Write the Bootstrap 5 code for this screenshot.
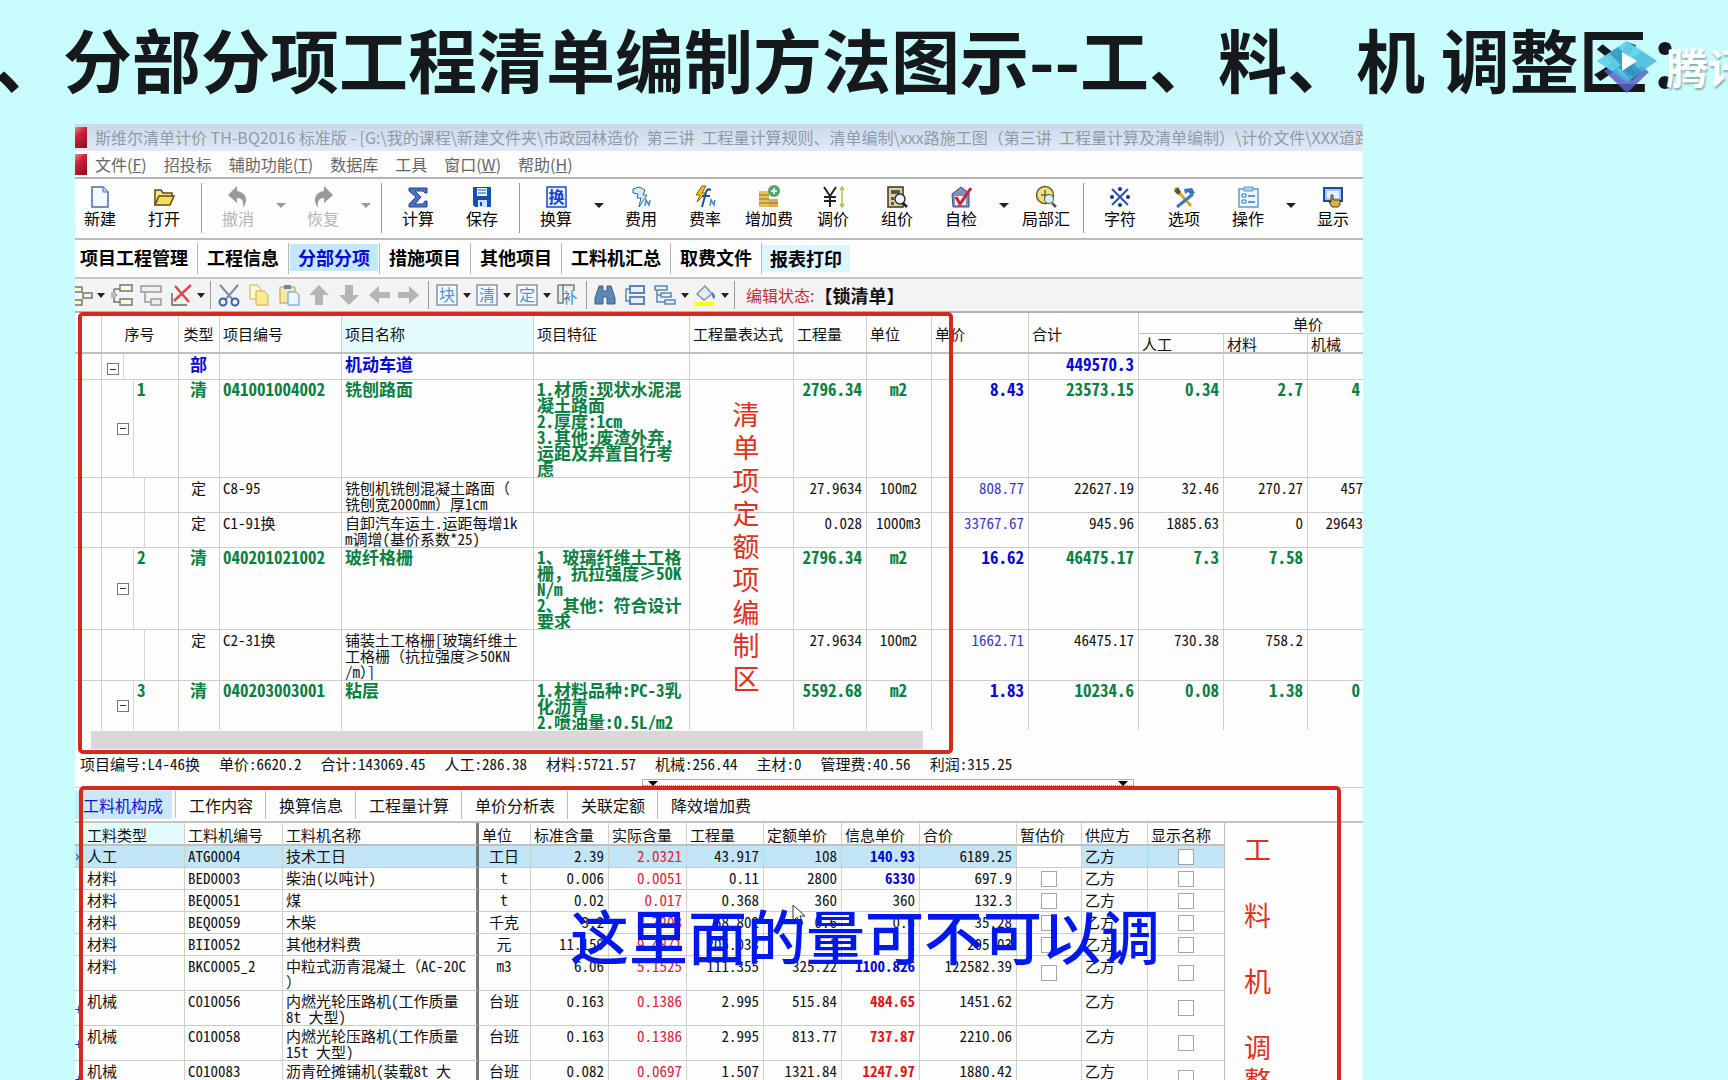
<!DOCTYPE html>
<html lang="zh-CN">
<head>
<meta charset="utf-8">
<meta name="viewport" content="width=device-width, initial-scale=1">
<title>分部分项工程清单编制方法图示</title>
<link href="https://cdn.jsdelivr.net/npm/bootstrap@5.3.0/dist/css/bootstrap.min.css" rel="stylesheet">
<style>
body{background:#c8fcfd;font-family:"Noto Sans CJK SC",sans-serif;color:#111}
.slide{height:100vh}
.slide-title{height:124px;font-size:69px;line-height:116px;font-weight:700;color:#15191c;margin:0 0 0 -6px}
.stage{padding-left:75px;padding-right:365px}
.app-window{background:#fdfdfe}
.brand{right:0;top:38px;width:132px;height:60px}
.brand-name{font-size:42px;line-height:50px;font-weight:700;color:#fff;text-shadow:1px 2px 2px #8aa;left:70px;top:3px}
.title-bar{height:27px;background:linear-gradient(#c9d8ea,#dfeaf7);color:#929ba5;font-size:16px;line-height:27px}
.menu-bar{height:28px;border-bottom:2px solid #b5b5b5;font-size:16px;line-height:26px;gap:17px}
.menu-bar a{color:#666}
.app-mark{width:12px;height:21px;background:linear-gradient(135deg,#e88 0,#d0203a 35%,#8e0a20);flex:none}
.menu-bar .app-mark{margin-right:-9px}
.path-text{white-space:pre}
.tool-bar{height:61px;border-bottom:2px solid #bcbcbc;padding-left:0;margin-left:-7px}
.tool-btn{width:64px;flex:none;border:0;background:none;padding:6px 0 0;font-size:16px;line-height:18px;color:#000;display:flex;flex-direction:column;align-items:center}
.tool-btn svg{width:24px;height:24px}
.tool-btn:disabled{color:#b4b4b4}
.drop{border:0;background:none;padding:0;flex:none}
.drop::after{content:"";display:block;margin:auto;width:0;border:5px solid transparent;border-top-color:#222;border-bottom:0}
.drop.off::after{border-top-color:#999}
.tool-bar .drop{width:21px;height:52px}
.tool-sep{width:10px;flex:none;display:flex;justify-content:center}
.tool-sep::after{content:"";width:1px;background:#9a9a9a;height:100%}
.tool-bar .tool-sep{height:50px;margin-top:4px}
.page-tabs{height:39px;border-bottom:2px solid #c6c6c6;font-size:18px;font-weight:700}
.page-tabs a{color:#000;padding:0 8px;margin:5px 0;line-height:27px;white-space:nowrap;text-decoration:none}
.page-tabs .tab-slot{border-right:1px solid #b5b5b5;padding:0 1px;margin:3px 0}
.page-tabs .tab-slot a{display:block;margin:1px 0}
.page-tabs .tab-slot:first-child a{padding-left:4px}
.page-tabs a.now{background:#c3e8fa;color:#0a0ad6}
.page-tabs a.hot{background:#dff5fd}
.edit-bar{height:34px;background:#f3f3f3;border-bottom:2px solid #adb3b3}
.edit-tools{margin-left:-9px}
.edit-btn{width:30px;flex:none;border:0;background:none;padding:0;line-height:0;text-align:center}
.edit-btn svg{width:24px;height:24px}
.edit-tools .drop{width:10px}
.edit-tools .drop::after{border-width:5px 4px 0}
.edit-tools .tool-sep{width:8px;height:28px}
.edit-state{font-size:16px;white-space:pre}
.edit-state b{font-size:18px}
.state-label{color:#b8323c}
.grid-pane,.lower-pane,.info-line{font-family:"Noto Sans Mono CJK SC","Noto Sans CJK SC","Liberation Mono",monospace;font-size:15px;line-height:16px}
.sheet{table-layout:fixed;width:100%;border-collapse:separate;border-spacing:0}
.sheet th{font-weight:400;color:#111}
.sheet td,.sheet th{border-right:1px solid #cfd0c6;border-bottom:1px solid #c9ccd0;padding:1px 4px 0 3px;vertical-align:top;white-space:nowrap;overflow:hidden}
.sheet tr>*:last-child{border-right:0}
.sheet thead th{vertical-align:middle;border-bottom:0;padding-top:2px}
.sheet thead tr:last-child th,.sheet thead th[rowspan]{border-bottom:2px solid #bcc0c3}
.bill thead tr{height:20px}
.bill tbody tr:first-child td{padding-top:2px}
.bill td{padding-top:1px}
.bill thead .sub-row th{border-top:1px solid #bbb}
.bill .group-head{padding-right:40px}
.bill .rate-item td{padding-top:2px}
.bill .list-item,.bill .part{font-size:17px;font-weight:700;color:#0a7f42}
.bill .part{color:#0808d0}
.bill .tail{padding-right:0}
.bill .cut{padding-right:3px}
.cost{color:#0808d0}
.rate-item .cost{color:#3a36c8}
.h-part{height:26px}.h-six{height:97px}.h-two{height:35px}.h-five{height:82px}.h-three{height:50px}.h-open{height:48px}
.h-open td{border-bottom:0}
.sheet .tree{padding-left:35px;position:relative;background:linear-gradient(#d5d5d5,#d5d5d5) 31px 0/1px 100% no-repeat}
.sheet .tree.root{background-position:21px 0}
.sheet .tree.leaf{background-position:42px 0}
.fold{position:absolute;left:15px;top:calc(50% - 6px);width:12px;height:12px;border:1px solid #777;background:#fff;padding:0}
.root .fold{left:5px;top:9px}
.fold::after{content:"";display:block;width:6px;height:1px;background:#333;margin:auto}
.sheet .picked{background:#e3fbfd}
.mark-frame{border:4px solid #d5291d;border-radius:5px;pointer-events:none}
.frame-top{left:3px;top:-1px;width:875px;height:442px}
.frame-low{left:4px;top:-2px;right:22px;bottom:-10px}
.note{color:#dc3222;font-size:27px;line-height:33px;text-align:center;font-family:"Noto Sans CJK SC",sans-serif}
.note-top{left:657px;top:84px;width:28px}
.note-low{padding:9px 0 0 19px}
.scroll-row{height:22px;padding:1px 0 0 16px}
.scroll-thumb{width:832px;height:18px;background:#dad7d8}
.info-line{height:27px;padding:0 0 3px 5px;gap:19px;white-space:nowrap}
.split-line{height:9px;border-bottom:1px solid #c6ccdc}
.split-grip{width:492px;height:7px;margin-left:567px;border:1px solid #aab;border-bottom:1px dotted #c66;padding:1px 5px 0;line-height:0}
.split-grip i{border:5px solid transparent;border-top-color:#000;border-bottom:0}
.low-tabs{height:35px;border-bottom:2px solid #c4c4c4;font-size:16px;font-family:"Noto Sans CJK SC",sans-serif}
.low-tabs a{color:#111;padding:0 12px 0 13px;line-height:28px;margin:3px 0 2px;border-right:1px solid #bbb;text-decoration:none;white-space:nowrap}
.low-tabs a:last-child{border:0}
.low-tabs a.now{padding:0 9px 0 8px;margin-right:3px;background:#cbe8fb;color:#1414cf;border:0}
.low-tabs .first-sep{width:1px;background:#bbb;margin:3px 0}
.parts{width:1150px;flex:none;border-right:1px solid #bbb}
.parts thead th{height:23px}
.parts td{height:22px;padding-top:2px}
.parts .tall td{height:35px}
.parts .sel td{background:#c2e6f8}
.parts .sel td.blank{background:#fdfdfe}
.parts .rule{border-right:3px solid #777}
.parts td.box{vertical-align:middle;text-align:center;padding:0;line-height:0}
.parts input{appearance:none;width:16px;height:16px;border:1px solid #a5a5a5;background:#fff;margin:0}
.parts .used{color:#e02036}
.parts .up{color:#e01818}
.parts .pin{padding:1px 0 0;color:#2a2a9a}
.caption-text{left:495px;top:105px;font-size:59px;line-height:84px;font-weight:500;color:#0018ee;white-space:nowrap;font-family:"Noto Sans CJK SC",sans-serif}
.pointer{left:717px;top:116px;width:14px;height:22px}
</style>
<script src="https://cdn.jsdelivr.net/npm/bootstrap@5.3.0/dist/js/bootstrap.bundle.min.js"></script>
</head>
<body>
<div class="slide overflow-hidden position-relative">
<h1 class="slide-title text-nowrap">、分部分项工程清单编制方法图示--工、料、机 调整区：</h1>
<div class="brand position-absolute overflow-hidden">
<svg width="64" height="58" viewBox="0 0 64 58"><path d="M8 33l8-5 15 13 14-13 8 6-22 21z" fill="#5a62c4" opacity=".85"/><path d="M31 3l30 20-30 21L1 23z" fill="#45b9dd" opacity=".85"/><path d="M31 3l15 10-30 20L1 23z" fill="#6fdcf0" opacity=".7"/><path d="M13 15l9-6 24 25-8 6z" fill="#2a8fb8" opacity=".7"/><path d="M26 14l15 9-15 10z" fill="#fff"/></svg>
<span class="brand-name position-absolute text-nowrap">腾讯</span>
</div>
<main class="stage">
<div class="app-window position-relative overflow-hidden">
<div class="title-bar d-flex align-items-center overflow-hidden"><span class="app-mark me-2"></span><span class="path-text">斯维尔清单计价 TH-BQ2016 标准版 - [G:\我的课程\新建文件夹\市政园林造价  第三讲  工程量计算规则、清单编制\xxx路施工图（第三讲  工程量计算及清单编制）\计价文件\XXX道路</span></div>
<nav class="menu-bar d-flex align-items-center text-nowrap"><span class="app-mark"></span>
<a class="text-decoration-none" href="#">文件(<u>F</u>)</a><a class="text-decoration-none" href="#">招投标</a><a class="text-decoration-none" href="#">辅助功能(<u>T</u>)</a><a class="text-decoration-none" href="#">数据库</a><a class="text-decoration-none" href="#">工具</a><a class="text-decoration-none" href="#">窗口(<u>W</u>)</a><a class="text-decoration-none" href="#">帮助(<u>H</u>)</a></nav>
<div class="tool-bar d-flex text-nowrap">
<button class="tool-btn"><svg viewBox="0 0 24 24"><path d="M4 2h11l5 5v15H4z" fill="#f4f8ff" stroke="#5068b0" stroke-width="1.5"/><path d="M15 2v5h5" fill="#c4d4f4" stroke="#5068b0"/></svg>新建</button>
<button class="tool-btn"><svg viewBox="0 0 24 24"><path d="M3 20V5h6l2 3h9v4" fill="#f5e08a" stroke="#5c4c10" stroke-width="1.5"/><path d="M3 20l4-9h15l-4 9z" fill="#f8dc60" stroke="#5c4c10" stroke-width="1.5"/></svg>打开</button>
<span class="tool-sep"></span>
<button class="tool-btn" disabled><svg viewBox="0 0 24 24"><path d="M11 1v5c9 1 12 9 6 17 1-7-1-10-6-10v5L2 10z" fill="#999"/></svg>撤消</button><button class="drop off" aria-label="撤消列表"></button>
<button class="tool-btn" disabled><svg viewBox="0 0 24 24"><path d="M13 1v5C4 7 1 15 7 23c-1-7 1-10 6-10v5l9-8z" fill="#999"/></svg>恢复</button><button class="drop off" aria-label="恢复列表"></button>
<span class="tool-sep"></span>
<button class="tool-btn"><svg viewBox="0 0 24 24"><path d="M3 3h18v5h-2l-2-2H9l6 6-6 7h8l2-3h2v6H3v-3l7-7-7-6z" fill="#4a70c0" stroke="#26458e"/></svg>计算</button>
<button class="tool-btn"><svg viewBox="0 0 24 24"><path d="M3 2h18v20H5l-2-2z" fill="#1450b4"/><path d="M7 3h10v8H7z" fill="#dff"/><path d="M8 5h8M8 8h8" stroke="#1450b4"/><path d="M8 15h9v7H8z" fill="#cfe4fa"/><path d="M10 17h2v4h-2z" fill="#1450b4"/></svg>保存</button>
<span class="tool-sep"></span>
<button class="tool-btn"><svg viewBox="0 0 24 24"><rect x="3" y="2" width="19" height="20" fill="#e8f0ff" stroke="#1848c8" stroke-width="1.5"/><text x="12.500" y="18" font-size="16" font-weight="700" text-anchor="middle" fill="#1440d0">换</text></svg>换算</button><button class="drop" aria-label="换算列表"></button>
<button class="tool-btn"><svg viewBox="0 0 24 24"><path d="M4 4l6-2 6 3-2 5h4l-8 12 2-9H8l1-4-5-1z" fill="#d6ecf8" stroke="#2f6a90"/><path d="M16 21l1-6 3 5 1-5" fill="none" stroke="#3f8ad0" stroke-width="1.500"/></svg>费用</button>
<button class="tool-btn"><svg viewBox="0 0 24 24"><path d="M9 1l-6 9h4l-3 7 9-9H9l4-7z" fill="#f6c31c" stroke="#8a6408"/><path d="M18 5c-4-2-5 1-6 6l-3 11M9 11h8" fill="none" stroke="#1c50a0" stroke-width="2"/><path d="M17 21l1-6 3 5 1-5" fill="none" stroke="#3f8ad0" stroke-width="1.500"/></svg>费率</button>
<button class="tool-btn"><svg viewBox="0 0 24 24"><path d="M2 6h10v16H2z" fill="#e6bf55"/><path d="M12 14h9v8h-9z" fill="#d7b052"/><path d="M2 10h10M2 14h10M2 18h19" stroke="#94752a"/><circle cx="17" cy="6" r="6" fill="#5c9f74"/><path d="M17 3v6M14 6h6" stroke="#cfe" stroke-width="2"/></svg>增加费</button>
<button class="tool-btn"><svg viewBox="0 0 24 24"><path d="M3 2l6 9 6-9M9 11v11M3 12h12M3 16h12" fill="none" stroke="#222" stroke-width="2"/><path d="M21 3v18M19 5l2-3 2 3M19 19l2 3 2-3" fill="none" stroke="#aec43c" stroke-width="1.500"/></svg>调价</button>
<button class="tool-btn"><svg viewBox="0 0 24 24"><rect x="3" y="2" width="15" height="20" fill="#e5d190" stroke="#333" stroke-width="1.500"/><path d="M6 5h9v4H6zM6 12h3v3H6zM6 17h3v3H6z" fill="#555"/><circle cx="15" cy="14" r="5" fill="#eef7fd" stroke="#333" stroke-width="1.500"/><path d="M18 18l4 4" stroke="#222" stroke-width="2.500"/></svg>组价</button>
<button class="tool-btn"><svg viewBox="0 0 24 24"><path d="M3 9l9-7 8 6v14H4z" fill="#8090c4" stroke="#444b70"/><path d="M6 11h11v9H6z" fill="#f7eef4"/><path d="M7 12l4 7L22 3" fill="none" stroke="#cf2436" stroke-width="3"/></svg>自检</button><button class="drop" aria-label="自检列表"></button>
<button class="tool-btn"><svg viewBox="0 0 24 24"><circle cx="11" cy="10" r="8.500" fill="#f3df80" stroke="#665a28" stroke-width="1.500"/><path d="M11 5v9M7 10h8" stroke="#5a6e50" stroke-width="1.500"/><circle cx="15" cy="14" r="4.500" fill="#ddeef8" stroke="#555"/><path d="M18 18l4 4" stroke="#555" stroke-width="2.500"/></svg>局部汇</button>
<span class="tool-sep"></span>
<button class="tool-btn"><svg viewBox="0 0 24 24"><path d="M4 4l16 16M20 4L4 20" stroke="#2850b0" stroke-width="2"/><g fill="#16337c"><circle cx="12" cy="4" r="2"/><circle cx="12" cy="20" r="2"/><circle cx="4" cy="12" r="2"/><circle cx="20" cy="12" r="2"/></g></svg>字符</button>
<button class="tool-btn"><svg viewBox="0 0 24 24"><path d="M3 3l16 18" stroke="#e0a818" stroke-width="3"/><path d="M21 9L5 22" stroke="#3a78c0" stroke-width="3"/><path d="M12 4l8-1 3 5-4 2-3-3-3 2z" fill="#3a78c0"/><path d="M2 6l4-4 3 5-3 3z" fill="#555a30"/></svg>选项</button>
<button class="tool-btn"><svg viewBox="0 0 24 24"><path d="M3 4h19v18H3z" fill="#edf7fe" stroke="#5c9cce" stroke-width="1.500"/><path d="M8 2h9v4H8z" fill="#a8d0ec" stroke="#5c9cce"/><path d="M6 9h4v3H6zM6 15h4v3H6z" fill="none" stroke="#347cbc"/><path d="M12 11h7M12 17h7" stroke="#347cbc" stroke-width="1.500"/></svg>操作</button><button class="drop" aria-label="操作列表"></button>
<button class="tool-btn"><svg viewBox="0 0 24 24"><path d="M3 3h18v13H3z" fill="#9cc4f0" stroke="#234c94" stroke-width="2"/><path d="M6 6h12v7H6z" fill="#e1f1ff"/><path d="M10 10h2v5h7v5l-2 2h-6l-3-5h2z" fill="#dcb246" stroke="#4d3c14"/></svg>显示</button>
</div>
<nav class="page-tabs d-flex">
<span class="tab-slot"><a href="#">项目工程管理</a></span><span class="tab-slot"><a href="#">工程信息</a></span><span class="tab-slot"><a class="now" href="#">分部分项</a></span><span class="tab-slot"><a href="#">措施项目</a></span><span class="tab-slot"><a href="#">其他项目</a></span><span class="tab-slot"><a href="#">工料机汇总</a></span><span class="tab-slot"><a href="#">取费文件</a></span><a class="hot" href="#">报表打印</a>
</nav>
<div class="edit-bar d-flex align-items-center">
<div class="edit-tools d-flex align-items-center">
<button class="edit-btn" aria-label="插入"><svg viewBox="0 0 24 24"><path d="M3 4h10v5H3zM14 10h9v5h-9zM3 17h10v5H3z" fill="#fff6cc" stroke="#777" stroke-width="1.500"/></svg></button><button class="drop" aria-label="插入列表"></button>
<button class="edit-btn" aria-label="插入子项"><svg viewBox="0 0 24 24"><path d="M5 6v13h6M5 6h6M2 12h6" fill="none" stroke="#777" stroke-width="1.500"/><path d="M11 2h12v6H11zM11 16h12v6H11z" fill="#fff6dd" stroke="#777" stroke-width="1.500"/><path d="M2 9h5v6H2z" fill="#bbb"/></svg></button>
<button class="edit-btn" aria-label="追加"><svg viewBox="0 0 24 24"><path d="M2 3h20v6H2zM12 16h10v6H12z" fill="#eee" stroke="#999" stroke-width="1.500"/><path d="M6 9v10h6" fill="none" stroke="#999" stroke-width="1.500"/></svg></button>
<button class="edit-btn" aria-label="删除"><svg viewBox="0 0 24 24"><path d="M3 10v12h15" fill="none" stroke="#666" stroke-width="1.500"/><path d="M6 3l14 16M22 2L5 18" stroke="#dc4a50" stroke-width="2.500"/></svg></button><button class="drop" aria-label="删除列表"></button>
<span class="tool-sep"></span>
<button class="edit-btn" aria-label="剪切"><svg viewBox="0 0 24 24"><path d="M3 2l13 15M21 2L8 17" stroke="#7a8ea8" stroke-width="2"/><circle cx="6" cy="19" r="3.500" fill="none" stroke="#3565ac" stroke-width="2"/><circle cx="18" cy="19" r="3.500" fill="none" stroke="#3565ac" stroke-width="2"/></svg></button>
<button class="edit-btn" aria-label="复制"><svg viewBox="0 0 24 24"><path d="M3 2h7l4 4v10H3z" fill="#fff7d0" stroke="#c8ad58"/><path d="M9 8h8l4 4v10H9z" fill="#ffeb95" stroke="#c8ad58"/></svg></button>
<button class="edit-btn" aria-label="粘贴"><svg viewBox="0 0 24 24"><path d="M3 4h15v16H3z" fill="#f7e7a8" stroke="#b79d50"/><path d="M7 2h7v4H7z" fill="#5b8ec0"/><path d="M11 9h8l3 3v10H11z" fill="#eaf5ff" stroke="#6597c6"/></svg></button>
<button class="edit-btn" aria-label="上移"><svg viewBox="0 0 24 24"><path d="M12 2l10 10h-6v10H8V12H2z" fill="#b5b5b5"/></svg></button>
<button class="edit-btn" aria-label="下移"><svg viewBox="0 0 24 24"><path d="M12 22l10-10h-6V2H8v10H2z" fill="#b5b5b5"/></svg></button>
<button class="edit-btn" aria-label="左移"><svg viewBox="0 0 24 24"><path d="M2 12l10-9v6h11v6H12v6z" fill="#b5b5b5"/></svg></button>
<button class="edit-btn" aria-label="右移"><svg viewBox="0 0 24 24"><path d="M22 12l-10-9v6H1v6h11v6z" fill="#b5b5b5"/></svg></button>
<span class="tool-sep"></span>
<button class="edit-btn" aria-label="块"><svg viewBox="0 0 24 24"><path d="M2 2h20v20H2z" fill="#f4faff" stroke="#8895a5" stroke-width="1.500"/><text x="12" y="18" font-size="16" text-anchor="middle" fill="#4c93cf">块</text></svg></button><button class="drop" aria-label="块列表"></button>
<button class="edit-btn" aria-label="清"><svg viewBox="0 0 24 24"><path d="M2 2h20v20H2z" fill="#f4faff" stroke="#8895a5" stroke-width="1.500"/><text x="12" y="18" font-size="16" text-anchor="middle" fill="#4c93cf">清</text></svg></button><button class="drop" aria-label="清列表"></button>
<button class="edit-btn" aria-label="定"><svg viewBox="0 0 24 24"><path d="M2 2h20v20H2z" fill="#f4faff" stroke="#8895a5" stroke-width="1.500"/><text x="12" y="18" font-size="16" text-anchor="middle" fill="#4c93cf">定</text></svg></button><button class="drop" aria-label="定列表"></button>
<button class="edit-btn" aria-label="补"><svg viewBox="0 0 24 24"><path d="M3 2h16v6M3 2v18h5V2" fill="#dfeefa" stroke="#7c7c70" stroke-width="1.500"/><text x="15" y="20" font-size="15" text-anchor="middle" fill="#3c83c4">补</text></svg></button>
<span class="tool-sep"></span>
<button class="edit-btn" aria-label="查找"><svg viewBox="0 0 24 24"><path d="M6 3h4v5h4V3h4l4 12v6h-8v-7h-4v7H2v-6z" fill="#5c86b4" stroke="#3a5f8c"/></svg></button>
<button class="edit-btn" aria-label="折叠"><svg viewBox="0 0 24 24"><path d="M7 3h14v7H7zM7 14h14v7H7z" fill="#e7f1fb" stroke="#5c86b4" stroke-width="2"/><path d="M7 6H3v12h4" fill="none" stroke="#5c86b4" stroke-width="1.500"/></svg></button>
<button class="edit-btn" aria-label="展开层级"><svg viewBox="0 0 24 24"><path d="M2 3h12v4H2zM8 10h10v4H8zM12 17h10v4H12z" fill="#e7f1fb" stroke="#5c86b4" stroke-width="1.500"/><path d="M4 7v12h8M4 12h4" fill="none" stroke="#5c86b4" stroke-width="1.500"/></svg></button><button class="drop" aria-label="层级列表"></button>
<button class="edit-btn" aria-label="填充"><svg viewBox="0 0 24 24"><path d="M4 11l8-8 7 8-8 6z" fill="#e4eefa" stroke="#7f93ad" stroke-width="1.500"/><path d="M19 9c4 3 3 6 2 7-2-1-2-4-2-7z" fill="#3c78c4"/><path d="M1 19h20v4H1z" fill="#ff0"/></svg></button><button class="drop" aria-label="填充列表"></button>
<span class="tool-sep"></span>
</div>
<span class="edit-state d-flex align-items-center ms-2"><span class="state-label">编辑状态:</span><b>【锁清单】</b></span>
</div>

<section class="grid-pane position-relative">
<table class="sheet bill">
<colgroup><col style="width:27px"><col style="width:77px"><col style="width:41px"><col style="width:122px"><col style="width:192px"><col style="width:156px"><col style="width:104px"><col style="width:73px"><col style="width:65px"><col style="width:97px"><col style="width:110px"><col style="width:85px"><col style="width:84px"><col></colgroup>
<thead>
<tr><th rowspan="2"></th><th rowspan="2" class="text-center">序号</th><th rowspan="2" class="text-center">类型</th><th rowspan="2">项目编号</th><th rowspan="2" class="picked">项目名称</th><th rowspan="2">项目特征</th><th rowspan="2">工程量表达式</th><th rowspan="2">工程量</th><th rowspan="2">单位</th><th rowspan="2">单价</th><th rowspan="2">合计</th><th colspan="3" class="text-end group-head">单价</th></tr>
<tr class="sub-row"><th>人工</th><th>材料</th><th>机械</th></tr>
</thead>
<tbody>
<tr class="part h-part"><td></td><td class="tree root"><button class="fold" aria-label="折叠"></button></td><td class="text-center">部</td><td></td><td>机动车道</td><td></td><td></td><td></td><td></td><td></td><td class="text-end">449570.3</td><td></td><td></td><td></td></tr>
<tr class="list-item h-six"><td></td><td class="tree">1<button class="fold" aria-label="折叠"></button></td><td class="text-center">清</td><td>041001004002</td><td>铣刨路面</td><td>1.材质:现状水泥混<br>凝土路面<br>2.厚度:1cm<br>3.其他:废渣外弃，<br>运距及弃置自行考<br>虑</td><td></td><td class="text-end">2796.34</td><td class="text-center">m2</td><td class="text-end cost">8.43</td><td class="text-end">23573.15</td><td class="text-end">0.34</td><td class="text-end">2.7</td><td class="text-end cut">4</td></tr>
<tr class="rate-item h-two"><td></td><td class="tree leaf"></td><td class="text-center">定</td><td>C8-95</td><td>铣刨机铣刨混凝土路面（<br>铣刨宽2000mm）厚1cm</td><td></td><td></td><td class="text-end">27.9634</td><td class="text-center">100m2</td><td class="text-end cost">808.77</td><td class="text-end">22627.19</td><td class="text-end">32.46</td><td class="text-end">270.27</td><td class="text-end tail">457</td></tr>
<tr class="rate-item h-two"><td></td><td class="tree leaf"></td><td class="text-center">定</td><td>C1-91换</td><td>自卸汽车运土.运距每增1k<br>m调增(基价系数*25)</td><td></td><td></td><td class="text-end">0.028</td><td class="text-center">1000m3</td><td class="text-end cost">33767.67</td><td class="text-end">945.96</td><td class="text-end">1885.63</td><td class="text-end">0</td><td class="text-end tail">29643</td></tr>
<tr class="list-item h-five"><td></td><td class="tree">2<button class="fold" aria-label="折叠"></button></td><td class="text-center">清</td><td>040201021002</td><td>玻纤格栅</td><td>1、玻璃纤维土工格<br>栅，抗拉强度≥50K<br>N/m<br>2、其他：符合设计<br>要求</td><td></td><td class="text-end">2796.34</td><td class="text-center">m2</td><td class="text-end cost">16.62</td><td class="text-end">46475.17</td><td class="text-end">7.3</td><td class="text-end">7.58</td><td></td></tr>
<tr class="rate-item h-three"><td></td><td class="tree leaf"></td><td class="text-center">定</td><td>C2-31换</td><td>铺装土工格栅[玻璃纤维土<br>工格栅（抗拉强度≥50KN<br>/m）]</td><td></td><td></td><td class="text-end">27.9634</td><td class="text-center">100m2</td><td class="text-end cost">1662.71</td><td class="text-end">46475.17</td><td class="text-end">730.38</td><td class="text-end">758.2</td><td></td></tr>
<tr class="list-item h-open"><td></td><td class="tree">3<button class="fold" aria-label="折叠"></button></td><td class="text-center">清</td><td>040203003001</td><td>粘层</td><td>1.材料品种:PC-3乳<br>化沥青<br>2.喷油量:0.5L/m2</td><td></td><td class="text-end">5592.68</td><td class="text-center">m2</td><td class="text-end cost">1.83</td><td class="text-end">10234.6</td><td class="text-end">0.08</td><td class="text-end">1.38</td><td class="text-end cut">0</td></tr>
</tbody>
</table>
<div class="scroll-row"><div class="scroll-thumb"></div></div>
<div class="mark-frame frame-top position-absolute"></div>
<div class="note note-top position-absolute">清单项定额项编制区</div>
</section>
<div class="info-line d-flex align-items-center"><span>项目编号:L4-46换</span><span>单价:6620.2</span><span>合计:143069.45</span><span>人工:286.38</span><span>材料:5721.57</span><span>机械:256.44</span><span>主材:0</span><span>管理费:40.56</span><span>利润:315.25</span></div>
<div class="split-line"><div class="split-grip d-flex justify-content-between"><i></i><i></i></div></div>

<section class="lower-pane position-relative">
<nav class="low-tabs d-flex"><a class="now" href="#">工料机构成</a><span class="first-sep"></span><a href="#">工作内容</a><a href="#">换算信息</a><a href="#">工程量计算</a><a href="#">单价分析表</a><a href="#">关联定额</a><a href="#">降效增加费</a></nav>
<div class="d-flex">
<div class="parts">
<table class="sheet">
<colgroup><col style="width:9px"><col style="width:101px"><col style="width:98px"><col style="width:196px"><col style="width:52px"><col style="width:78px"><col style="width:78px"><col style="width:77px"><col style="width:78px"><col style="width:78px"><col style="width:97px"><col style="width:65px"><col style="width:66px"><col></colgroup>
<thead><tr><th class="picked p-0 border-end-0"></th><th class="picked">工料类型</th><th>工料机编号</th><th class="rule">工料机名称</th><th>单位</th><th>标准含量</th><th>实际含量</th><th>工程量</th><th>定额单价</th><th>信息单价</th><th>合价</th><th>暂估价</th><th>供应方</th><th>显示名称</th></tr></thead>
<tbody>
<tr class="sel"><td class="pin border-end-0">›</td><td>人工</td><td>ATG0004</td><td class="rule">技术工日</td><td class="text-center">工日</td><td class="text-end">2.39</td><td class="text-end used">2.0321</td><td class="text-end">43.917</td><td class="text-end">108</td><td class="text-end cost fw-bold">140.93</td><td class="text-end">6189.25</td><td class="blank"></td><td>乙方</td><td class="box"><input type="checkbox" aria-label="显示名称"></td></tr>
<tr><td class="pin border-end-0"></td><td>材料</td><td>BED0003</td><td class="rule">柴油(以吨计)</td><td class="text-center">t</td><td class="text-end">0.006</td><td class="text-end used">0.0051</td><td class="text-end">0.11</td><td class="text-end">2800</td><td class="text-end cost fw-bold">6330</td><td class="text-end">697.9</td><td class="box"><input type="checkbox" aria-label="暂估价"></td><td>乙方</td><td class="box"><input type="checkbox" aria-label="显示名称"></td></tr>
<tr><td class="pin border-end-0"></td><td>材料</td><td>BEQ0051</td><td class="rule">煤</td><td class="text-center">t</td><td class="text-end">0.02</td><td class="text-end used">0.017</td><td class="text-end">0.368</td><td class="text-end">360</td><td class="text-end">360</td><td class="text-end">132.3</td><td class="box"><input type="checkbox" aria-label="暂估价"></td><td>乙方</td><td class="box"><input type="checkbox" aria-label="显示名称"></td></tr>
<tr><td class="pin border-end-0"></td><td>材料</td><td>BEQ0059</td><td class="rule">木柴</td><td class="text-center">千克</td><td class="text-end">3.2</td><td class="text-end used">2.7208</td><td class="text-end">58.802</td><td class="text-end">0.6</td><td class="text-end">0.6</td><td class="text-end">35.28</td><td class="box"><input type="checkbox" aria-label="暂估价"></td><td>乙方</td><td class="box"><input type="checkbox" aria-label="显示名称"></td></tr>
<tr><td class="pin border-end-0"></td><td>材料</td><td>BII0052</td><td class="rule">其他材料费</td><td class="text-center">元</td><td class="text-end">11.159</td><td class="text-end used">9.4871</td><td class="text-end">205.033</td><td class="text-end">1</td><td class="text-end">1</td><td class="text-end">205.03</td><td class="box"><input type="checkbox" aria-label="暂估价"></td><td>乙方</td><td class="box"><input type="checkbox" aria-label="显示名称"></td></tr>
<tr class="tall"><td class="pin border-end-0"></td><td>材料</td><td>BKC0005_2</td><td class="rule">中粒式沥青混凝土（AC-20C<br>）</td><td class="text-center">m3</td><td class="text-end">6.06</td><td class="text-end used">5.1525</td><td class="text-end">111.355</td><td class="text-end">325.22</td><td class="text-end cost fw-bold">1100.826</td><td class="text-end">122582.39</td><td class="box"><input type="checkbox" aria-label="暂估价"></td><td>乙方</td><td class="box"><input type="checkbox" aria-label="显示名称"></td></tr>
<tr class="tall"><td class="pin border-end-0 align-middle">+</td><td>机械</td><td>C010056</td><td class="rule">内燃光轮压路机(工作质量<br>8t 大型)</td><td class="text-center">台班</td><td class="text-end">0.163</td><td class="text-end used">0.1386</td><td class="text-end">2.995</td><td class="text-end">515.84</td><td class="text-end up fw-bold">484.65</td><td class="text-end">1451.62</td><td></td><td>乙方</td><td class="box"><input type="checkbox" aria-label="显示名称"></td></tr>
<tr class="tall"><td class="pin border-end-0 align-middle">+</td><td>机械</td><td>C010058</td><td class="rule">内燃光轮压路机(工作质量<br>15t 大型)</td><td class="text-center">台班</td><td class="text-end">0.163</td><td class="text-end used">0.1386</td><td class="text-end">2.995</td><td class="text-end">813.77</td><td class="text-end up fw-bold">737.87</td><td class="text-end">2210.06</td><td></td><td>乙方</td><td class="box"><input type="checkbox" aria-label="显示名称"></td></tr>
<tr class="tall"><td class="pin border-end-0 align-middle">+</td><td>机械</td><td>C010083</td><td class="rule">沥青砼摊铺机(装载8t 大<br>型)</td><td class="text-center">台班</td><td class="text-end">0.082</td><td class="text-end used">0.0697</td><td class="text-end">1.507</td><td class="text-end">1321.84</td><td class="text-end up fw-bold">1247.97</td><td class="text-end">1880.42</td><td></td><td>乙方</td><td class="box"><input type="checkbox" aria-label="显示名称"></td></tr>
</tbody>
</table>
</div>
<div class="note note-low">工<br><br>料<br><br>机<br><br>调<br>整</div>
</div>
<div class="mark-frame frame-low position-absolute"></div>
<svg class="pointer position-absolute" viewBox="0 0 14 22"><path d="M1 1v16l4-4 3 8 3-1-3-8h5z" fill="#fff" stroke="#333"/></svg>
<div class="caption-text position-absolute">这里面的量可不可以调</div>
</section>
</div>
</main>
</div>
</body>
</html>
